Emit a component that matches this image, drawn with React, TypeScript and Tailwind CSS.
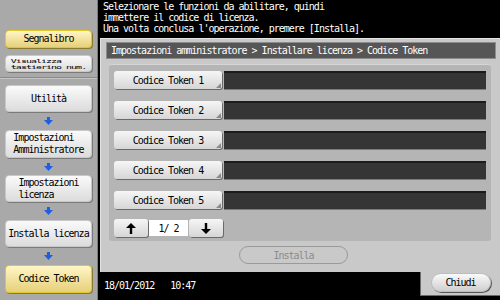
import React from "react";

const mono = "font-['DejaVu_Sans_Mono','Liberation_Mono',monospace] tracking-[-1px]";

function SideButton({ children, active = false, h }: { children: React.ReactNode; active?: boolean; h: string }) {
  return (
    <div
      className={`${h} flex items-center justify-center rounded-[4px] text-[10px] leading-[12px] text-black ${
        active
          ? "border border-[#e3c62a] bg-gradient-to-b from-[#fff6c4] to-[#e6d07a] shadow-[1px_1px_0_#8a7a30]"
          : "border border-[#c8c8c8] bg-gradient-to-b from-[#fafafa] to-[#dcdcdc] shadow-[1px_1px_0_#7a7a7a]"
      }`}
    >
      <div className="text-left">{children}</div>
    </div>
  );
}

function DownArrow() {
  return (
    <div className="flex h-[18px] items-center justify-center">
      <svg width="9" height="8" viewBox="0 0 9 8">
        <rect x="3" y="0" width="3" height="3" fill="#1d5fe0" />
        <polygon points="0,3 9,3 4.5,8" fill="#1d5fe0" />
      </svg>
    </div>
  );
}

function TokenRow({ n }: { n: number }) {
  return (
    <div className="flex h-[18px] gap-[2px]">
      <div className="relative flex w-[108px] items-center justify-center rounded-[3px] bg-gradient-to-b from-[#f6f6f6] to-[#d6d6d6] text-[10px] text-black shadow-[1px_1px_0_#6a6a6a]">
        Codice Token {n}
        <svg className="absolute bottom-[1px] right-[1px]" width="5" height="5" viewBox="0 0 5 5">
          <polygon points="5,0 5,5 0,5" fill="#8a8a8a" />
        </svg>
      </div>
      <div className="flex-1 border-t-2 border-[#1c1c1c] bg-[#353535] shadow-[0_1px_0_#7a7a7a]" />
    </div>
  );
}

function PagerButton({ up }: { up: boolean }) {
  return (
    <div className="flex h-[18px] w-[34px] items-center justify-center rounded-[3px] bg-gradient-to-b from-[#f6f6f6] to-[#d6d6d6] shadow-[1px_1px_0_#6a6a6a]">
      <svg width="10" height="11" viewBox="0 0 10 11">
        {up ? (
          <>
            <polygon points="5,0 10,5 0,5" fill="#000" />
            <rect x="3.8" y="4" width="2.4" height="7" fill="#000" />
          </>
        ) : (
          <>
            <rect x="3.8" y="0" width="2.4" height="7" fill="#000" />
            <polygon points="0,6 10,6 5,11" fill="#000" />
          </>
        )}
      </svg>
    </div>
  );
}

export default function App() {
  return (
    <div className={`flex h-[300px] w-[500px] overflow-hidden bg-black ${mono}`}>
      {/* Sidebar */}
      <div className="flex w-[98px] flex-col border-r border-[#7c7c7c] bg-[#a9a9a9]">
        <div className="flex h-[78px] flex-col gap-[7px] border-b border-[#8a8a8a] px-[5px] pt-[30px]">
          <SideButton h="h-[18px]" active>
            Segnalibro
          </SideButton>
          <div className="flex h-[17px] items-center justify-center rounded-[4px] border border-[#c8c8c8] bg-gradient-to-b from-[#fafafa] to-[#dcdcdc] text-[10px] leading-[9px] text-black shadow-[1px_1px_0_#7a7a7a]">
            <div className="scale-y-[0.58] text-left">
              Visualizza
              <br />
              tastierino num.
            </div>
          </div>
        </div>
        <div className="flex flex-col border-t border-[#c4c4c4] px-[5px] pt-[6px]">
          <SideButton h="h-[27px]">Utilità</SideButton>
          <DownArrow />
          <SideButton h="h-[28px]">
            Impostazioni
            <br />
            Amministratore
          </SideButton>
          <div className="h-[17px] flex items-center justify-center">
            <DownArrow />
          </div>
          <SideButton h="h-[27px]">
            Impostazioni
            <br />
            licenza
          </SideButton>
          <DownArrow />
          <SideButton h="h-[27px]">Installa licenza</SideButton>
          <DownArrow />
          <SideButton h="h-[28px]" active>
            Codice Token
          </SideButton>
        </div>
      </div>

      {/* Main */}
      <div className="flex flex-1 flex-col pl-[2px]">
        <div className="h-[38px] pl-[3px] pt-[1px] text-[10px] leading-[11px] text-white">
          Selezionare le funzioni da abilitare, quindi
          <br />
          immettere il codice di licenza.
          <br />
          Una volta conclusa l'operazione, premere [Installa].
        </div>

        <div className="flex h-[234px] flex-col border-l border-t border-[#e4e4e4] bg-[#c9c9c9] pl-[5px] pr-[4px] pt-[3px]">
          <div className="flex h-[17px] items-center border border-[#8c8c8c] bg-[#565656] pl-[4px] text-[10px] text-white">
            Impostazioni amministratore &gt; Installare licenza &gt; Codice Token
          </div>
          <div className="ml-[3px] mr-[5px] mt-[5px] flex flex-col gap-[12px] rounded-[3px] border-t border-[#d6d6d6] bg-[#b5b5b5] pb-[4px] pl-[5px] pr-[5px] pt-[6px]">
            <TokenRow n={1} />
            <TokenRow n={2} />
            <TokenRow n={3} />
            <TokenRow n={4} />
            <TokenRow n={5} />
            <div className="-mt-[2px] flex items-center gap-[1px]">
              <PagerButton up />
              <div className="flex h-[16px] w-[39px] items-center justify-center bg-white text-[10px] text-black">
                1/ 2
              </div>
              <PagerButton up={false} />
            </div>
          </div>
          <div className="ml-[133px] mt-[5px] flex h-[18px] w-[109px] items-center justify-center rounded-full border border-[#9a9a9a] text-[10px] text-[#8c8c8c]">
            Installa
          </div>
        </div>

        <div className="flex flex-1">
          <div className="flex flex-1 items-center gap-[16px] pb-[2px] pl-[4px] text-[10px] text-white">
            <span>18/01/2012</span>
            <span>10:47</span>
          </div>
          <div className="flex h-[24px] w-[80px] items-start justify-center border-b border-l border-[#6a6a6a] bg-[#c9c9c9] pt-[1px]">
            <div className="flex h-[19px] w-[60px] items-center justify-center rounded-full border border-[#bdbdbd] bg-gradient-to-b from-[#fafafa] to-[#cfcfcf] text-[10px] text-black shadow-[1px_1px_0_#555]">
              Chiudi
            </div>
          </div>
        </div>
      </div>
    </div>
  );
}
